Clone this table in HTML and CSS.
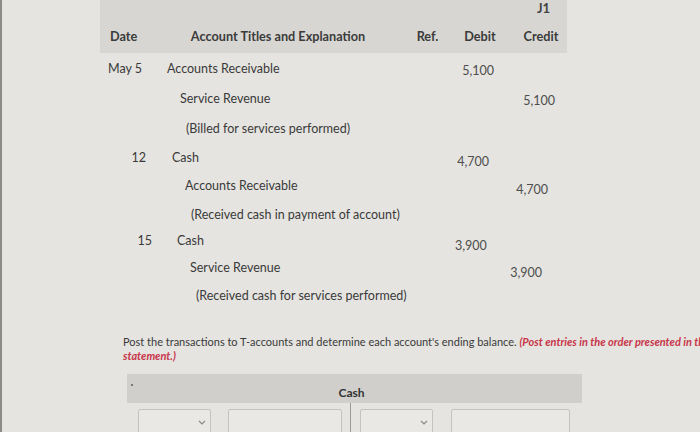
FILE: index.html
```html
<!DOCTYPE html>
<html>
<head>
<meta charset="utf-8">
<link rel="stylesheet" href="styles.css">
</head>
<body>
<div class="page">
  <div class="journal">
    <div class="jhead">
      <div class="jnum">J1</div>
      <div class="row hrow">
        <div class="c-date">Date</div>
        <div class="c-acct">Account Titles and Explanation</div>
        <div class="c-ref">Ref.</div>
        <div class="c-dr">Debit</div>
        <div class="c-cr">Credit</div>
      </div>
    </div>

    <div class="entry e1">
      <div class="row r1"><div class="c-date first">May 5</div><div class="c-acct a0">Accounts Receivable</div><div class="c-ref"></div><div class="c-dr num">5,100</div><div class="c-cr num"></div></div>
      <div class="row r2"><div class="c-date"></div><div class="c-acct a1">Service Revenue</div><div class="c-ref"></div><div class="c-dr num"></div><div class="c-cr num">5,100</div></div>
      <div class="row r3"><div class="c-date"></div><div class="c-acct a2">(Billed for services performed)</div><div class="c-ref"></div><div class="c-dr"></div><div class="c-cr"></div></div>
    </div>

    <div class="entry e2">
      <div class="row r1"><div class="c-date">12</div><div class="c-acct a0">Cash</div><div class="c-ref"></div><div class="c-dr num">4,700</div><div class="c-cr num"></div></div>
      <div class="row r2"><div class="c-date"></div><div class="c-acct a1">Accounts Receivable</div><div class="c-ref"></div><div class="c-dr num"></div><div class="c-cr num">4,700</div></div>
      <div class="row r3"><div class="c-date"></div><div class="c-acct a2">(Received cash in payment of account)</div><div class="c-ref"></div><div class="c-dr"></div><div class="c-cr"></div></div>
    </div>

    <div class="entry e3">
      <div class="row r1"><div class="c-date">15</div><div class="c-acct a0">Cash</div><div class="c-ref"></div><div class="c-dr num">3,900</div><div class="c-cr num"></div></div>
      <div class="row r2"><div class="c-date"></div><div class="c-acct a1">Service Revenue</div><div class="c-ref"></div><div class="c-dr num"></div><div class="c-cr num">3,900</div></div>
      <div class="row r3"><div class="c-date"></div><div class="c-acct a2">(Received cash for services performed)</div><div class="c-ref"></div><div class="c-dr"></div><div class="c-cr"></div></div>
    </div>
  </div>

  <p class="instr">Post the transactions to T-accounts and determine each account's ending balance. <em class="note">(Post entries in the order presented in the problem statement.)</em></p>

  <div class="taccount">
    <div class="tband"><span class="tmark"></span><span class="ttitle">Cash</span></div>
    <div class="tbody">
      <div class="tside left">
        <div class="sel"><svg class="chev" width="8" height="5" viewBox="0 0 8 5"><path d="M1 1 L4 4 L7 1" fill="none" stroke="#8a8a88" stroke-width="1.2"/></svg></div>
        <div class="inp"></div>
      </div>
      <div class="tside right">
        <div class="sel sel2"><svg class="chev" width="8" height="5" viewBox="0 0 8 5"><path d="M1 1 L4 4 L7 1" fill="none" stroke="#8a8a88" stroke-width="1.2"/></svg></div>
        <div class="inp inp2"></div>
      </div>
    </div>
  </div>
</div>
</body>
</html>
```

FILE: styles.css
```css
html, body {
  margin: 0;
  padding: 0;
  height: 100%;
  overflow: hidden;
}
body {
  background: #e5e4e0;
  font-family: Lato, "Open Sans", sans-serif;
  color: #3a3a3a;
  border-left: 2px solid #8c8b87;
  box-sizing: border-box;
}
.page {
  padding-left: 98px;
}
.journal {
  width: 467px;
}
.jhead {
  background: #d7d6d2;
  height: 53px;
  box-sizing: border-box;
  padding-top: 1px;
}
.jnum {
  font-size: 13px;
  font-weight: 700;
  text-align: right;
  padding-right: 17px;
  height: 16px;
  line-height: 14px;
  color: #444;
}
.row {
  display: grid;
  grid-template-columns: 60px 240px 55px 50px 62px;
  align-items: center;
  height: 29px;
  font-size: 12.5px;
}
.hrow {
  height: 38px;
  font-weight: 700;
  color: #3b3b3b;
  font-size: 12.7px;
}
.hrow .c-date {
  text-align: left;
  padding-left: 10px;
  padding-right: 0;
}
.hrow .c-acct {
  text-align: center;
  padding-right: 4px;
}
.hrow .c-ref, .hrow .c-dr {
  text-align: center;
}
.hrow .c-cr {
  text-align: center;
  padding-left: 10px;
}
.e1 .r1 { height: 30px; }
.e1 .r2 { height: 31px; }
.e1 .r3 { height: 29px; }
.e2 .r1 { height: 28px; }
.e2 .r2 { height: 29px; }
.e2 .r3 { height: 28px; }
.e3 .r1 { height: 25px; }
.e3 .r2 { height: 28px; }
.e3 .r3 { height: 29px; }

.c-date {
  text-align: right;
  padding-right: 14px;
}
.c-date.first {
  text-align: left;
  padding-left: 8px;
  padding-right: 0;
}
.c-acct {
  white-space: nowrap;
}
.a0 { padding-left: 7px; }
.a1 { padding-left: 20px; }
.a2 { padding-left: 26px; }
.num {
  text-align: right;
  color: #4d4d4d;
  font-size: 12.5px;
  position: relative;
  top: 2px;
}
.c-dr.num { padding-right: 11px; }
.c-cr.num { padding-right: 12px; }

.e2 .c-acct { margin-left: 5px; }
.e2 .c-dr.num { padding-right: 16px; top: 4px; }
.e2 .c-cr.num { padding-right: 19px; top: 4px; }
.e2 .c-date { padding-right: 14px; }

.e3 .c-acct { margin-left: 10px; }
.e3 .c-dr.num { padding-right: 21px; top: 5px; }
.e3 .c-cr.num { padding-right: 25px; top: 5px; }
.e3 .c-date { padding-right: 8px; }

.instr {
  margin: 25px 0 0 23px;
  width: 640px;
  font-size: 11px;
  line-height: 14px;
  color: #3a3a3a;
}
.note {
  color: #c8364a;
  font-weight: 700;
  font-style: italic;
}
.taccount {
  margin: 11px 0 0 27px;
  width: 455px;
}
.tband {
  position: relative;
  background: #d0cfcb;
  height: 29px;
  display: flex;
  align-items: flex-end;
  justify-content: center;
  padding-bottom: 3px;
  box-sizing: border-box;
}
.tmark {
  position: absolute;
  left: 4px;
  top: 10px;
  width: 2px;
  height: 2px;
  background: #777;
}
.ttitle {
  font-size: 12px;
  font-weight: 700;
  color: #333;
  padding-right: 6px;
}
.tbody {
  display: flex;
  height: 40px;
}
.tside {
  display: flex;
  align-items: flex-start;
  padding-top: 6px;
  box-sizing: border-box;
}
.tside.left {
  width: 224px;
  border-right: 1px solid #9c9b98;
  padding-left: 11px;
  gap: 17px;
}
.tside.right {
  flex: 1;
  padding-left: 9px;
  gap: 18px;
}
.sel, .inp {
  height: 26px;
  border: 1px solid #c4c3bf;
  background: #e9e8e5;
  box-sizing: border-box;
  border-radius: 2px;
  position: relative;
}
.sel {
  width: 73px;
  display: flex;
  align-items: center;
  justify-content: flex-end;
  padding-right: 4px;
}
.inp {
  width: 114px;
}
.inp2 {
  width: 119px;
}
```
